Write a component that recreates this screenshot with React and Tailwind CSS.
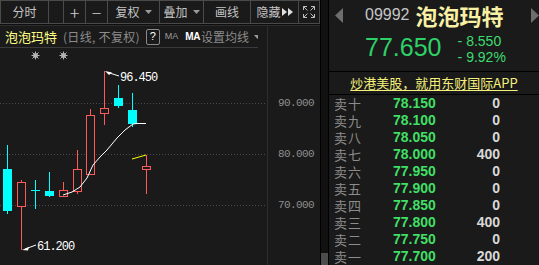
import React from 'react'

const candles = [
  { x: 3, bt: 169, bb: 210, h: 145, l: 214, up: false },
  { x: 17, bt: 182, bb: 206, h: 180, l: 250, up: true },
  { x: 31, bt: 190, bb: 190, h: 180, l: 209, up: false },
  { x: 45, bt: 191, bb: 195, h: 172, l: 197, up: false },
  { x: 59, bt: 190, bb: 196, h: 182, l: 196, up: true },
  { x: 73, bt: 169, bb: 191, h: 150, l: 194, up: true },
  { x: 86, bt: 115, bb: 174, h: 109, l: 174, up: true },
  { x: 100, bt: 108, bb: 113, h: 71, l: 125, up: true },
  { x: 114, bt: 98, bb: 105, h: 85, l: 108, up: false },
  { x: 128, bt: 110, bb: 123, h: 93, l: 127, up: false },
  { x: 142, bt: 166, bb: 169, h: 155, l: 194, up: true },
]

const asks = [
  ['卖十', '78.150', '0'],
  ['卖九', '78.100', '0'],
  ['卖八', '78.050', '0'],
  ['卖七', '78.000', '400'],
  ['卖六', '77.950', '0'],
  ['卖五', '77.900', '0'],
  ['卖四', '77.850', '0'],
  ['卖三', '77.800', '400'],
  ['卖二', '77.750', '0'],
  ['卖一', '77.700', '200'],
]

function Caret() {
  return (
    <svg width="7" height="4" viewBox="0 0 7 4" className="ml-[5px] shrink-0">
      <path d="M0 0h7L3.5 4z" fill="#9a9a9a" />
    </svg>
  )
}

function Star({ cx, cy }) {
  return (
    <g stroke="#b4b4b4" strokeWidth="1">
      <line x1={cx - 4} y1={cy} x2={cx + 4} y2={cy} />
      <line x1={cx} y1={cy - 4} x2={cx} y2={cy + 4} />
      <line x1={cx - 3} y1={cy - 3} x2={cx + 3} y2={cy + 3} />
      <line x1={cx - 3} y1={cy + 3} x2={cx + 3} y2={cy - 3} />
      <circle cx={cx} cy={cy} r="2" fill="#b4b4b4" />
    </g>
  )
}

function Chart() {
  return (
    <svg width="267" height="217" className="block">
      <g transform="translate(0,-48)">
        {[103.5, 154.5, 205.5].map(y => (
          <line key={y} x1="0" y1={y} x2="267" y2={y} stroke="#4a4a4a" strokeDasharray="1 2" />
        ))}
        <Star cx={35.5} cy={55.5} />
        <Star cx={63.5} cy={55.5} />
        {candles.map((c, i) => {
          const col = c.up ? '#ff5a5a' : '#00ffff'
          const wx = c.x + 4.5
          return (
            <g key={i}>
              <line x1={wx} y1={c.h} x2={wx} y2={c.l} stroke={col} />
              {c.bt === c.bb ? (
                <line x1={c.x} y1={c.bt + 0.5} x2={c.x + 9} y2={c.bt + 0.5} stroke={col} />
              ) : c.up ? (
                <rect x={c.x + 0.5} y={c.bt + 0.5} width="8" height={c.bb - c.bt} fill="#1a1a1a" stroke={col} />
              ) : (
                <rect x={c.x} y={c.bt} width="9" height={c.bb - c.bt + 1} fill={col} />
              )}
            </g>
          )
        })}
        <polyline
          points="63,195 72,192 80,187 87,178 93,165 100,157 107,150 117,138 125,130 133,124 137,123.5 146,123.5"
          fill="none"
          stroke="#ffffff"
          strokeWidth="1"
        />
        <line x1="132" y1="159" x2="146" y2="155" stroke="#ffff00" />
        <path d="M105 71l7 1.5-3 2.5z" fill="#fff" />
        <line x1="108" y1="72.5" x2="119" y2="76" stroke="#fff" />
        <text x="120" y="81" fill="#fff" fontSize="12" fontFamily="Liberation Mono, monospace" letterSpacing="-1">96.450</text>
        <path d="M22 250l7-3-1 3.5z" fill="#fff" />
        <line x1="25" y1="249" x2="36" y2="245" stroke="#fff" />
        <text x="37" y="250" fill="#fff" fontSize="12" fontFamily="Liberation Mono, monospace" letterSpacing="-1">61.200</text>
      </g>
    </svg>
  )
}

function Toolbar() {
  const cell = 'flex items-center justify-center border-r border-[#4a4a4a] h-full whitespace-nowrap'
  return (
    <div className="flex h-[24px] border-y border-[#4a4a4a] text-[12px] text-[#c4c4c4]">
      <div className={`${cell} w-[49px] border-l`}>分时</div>
      <div className={`${cell} w-[15px]`} />
      <div className={`${cell} w-[22px] text-[18px] font-light text-[#d0d0d0]`}>+</div>
      <div className={`${cell} w-[22px] text-[18px] font-light text-[#d0d0d0]`}>−</div>
      <div className={`${cell} w-[52px]`}>复权<Caret /></div>
      <div className={`${cell} w-[44px]`}>叠加<Caret /></div>
      <div className={`${cell} w-[47px]`}>画线</div>
      <div className={`${cell} w-[48px]`}>
        隐藏
        <svg width="11" height="8" viewBox="0 0 11 8" className="ml-[1px]">
          <path d="M0 0l5 4-5 4zM6 0l5 4-5 4z" fill="#e0e0e0" />
        </svg>
      </div>
      <div className={`${cell} w-[21px]`}>
        <svg width="12" height="12" viewBox="0 0 12 12" fill="none" stroke="#bdbdbd" strokeWidth="1">
          <path d="M0.5 4V0.5H4M0.5 0.5l4 4M8 0.5h3.5V4M11.5 0.5l-4 4M0.5 8v3.5H4M0.5 11.5l4-4M8 11.5h3.5V8M11.5 11.5l-4-4" />
        </svg>
      </div>
    </div>
  )
}

export default function App() {
  return (
    <div className="flex w-[539px] h-[265px] overflow-hidden bg-[#1a1a1a] font-['Noto_Sans_CJK_SC',sans-serif]">
      <div className="flex flex-col w-[320px] shrink-0">
        <Toolbar />
        <div className="h-[2px] border-t border-[#0e0e0e] border-b border-b-[#2c2c2c]" />
        <div className="flex flex-1">
          <div className="w-[268px] shrink-0 border-r border-[#2e2e2e] flex flex-col">
            <div className="w-[258px] h-[22px] border-b border-[#3a3a3a] flex items-center pl-[5px] text-[12px] leading-none whitespace-nowrap overflow-hidden">
              <span className="shrink-0 text-[13px] text-[#ffff88]">泡泡玛特</span>
              <span className="shrink-0 ml-[6px] text-[#8c8c8c] tracking-[0.3px]">(日线, 不复权)</span>
              <span className="shrink-0 ml-[6px] w-[14px] h-[16px] border border-[#8a8a8a] rounded-[2px] flex items-center justify-center text-[11px] text-white font-['Liberation_Sans',sans-serif]">?</span>
              <span className="shrink-0 ml-[5px] text-[9px] text-[#9a9a9a] font-['Liberation_Sans',sans-serif]">MA</span>
              <span className="shrink-0 ml-[7px] text-[10px] font-bold text-white font-['Liberation_Sans',sans-serif] tracking-[-0.5px]">MA</span>
              <span className="shrink-0 ml-[1px] text-[#8c8c8c]">设置均线</span>
              <Caret />
            </div>
            <Chart />
          </div>
          <div className="flex-1 flex flex-col items-end pt-[71px] pr-[6px] gap-[39px] text-[11px] leading-[12px] text-[#8e8e8e] font-['Liberation_Mono',monospace] tracking-[-0.6px]">
            <span>90.000</span>
            <span>80.000</span>
            <span>70.000</span>
          </div>
        </div>
      </div>
      <div className="w-[9px] shrink-0 flex flex-col justify-end border-x border-black bg-[#111111]">
        <div className="h-[12px] bg-[#4c4c4c]" />
      </div>
      <div className="flex-1 flex flex-col">
        <div className="flex items-center h-[30px] whitespace-nowrap">
          <svg width="8" height="15" viewBox="0 0 8 15" className="ml-[6px] shrink-0">
            <path d="M8 0v15L0 7.5z" fill="#6e6e6e" />
          </svg>
          <span className="ml-[22px] text-[16px] text-[#c6c6c6] font-['Liberation_Sans',sans-serif]">09992</span>
          <span className="ml-[6px] text-[22px] leading-none font-bold text-[#f8f0a4]">泡泡玛特</span>
          <div className="flex-1" />
          <svg width="8" height="15" viewBox="0 0 8 15" className="shrink-0">
            <path d="M0 0v15l8-7.5z" fill="#6e6e6e" />
          </svg>
        </div>
        <div className="flex h-[41px] font-['Liberation_Sans',sans-serif]">
          <span className="ml-[36px] mt-[5px] text-[25px] leading-none text-[#2ed068]">77.650</span>
          <div className="ml-[16px] mt-[3px] flex flex-col text-[14px] leading-[16px] text-[#3ddc70]">
            <span>-<span className="ml-[4px]">8.550</span></span>
            <span>-<span className="ml-[4px]">9.92%</span></span>
          </div>
        </div>
        <div className="h-[24px] border-y border-black flex items-center justify-center">
          <span className="text-[13px] leading-[16px] text-[#f5f07a] underline underline-offset-2 whitespace-nowrap">炒港美股，就用东财国际APP</span>
        </div>
        <div className="flex flex-col">
          {asks.map(([label, price, vol]) => (
            <div key={label} className="flex items-center h-[17px] pl-[5px]">
              <span className="w-[59px] text-[13px] leading-[17px] tracking-[1px] text-[#8c8c8c]">{label}</span>
              <span className="w-[60px] text-[14px] font-bold leading-[17px] text-[#40df65] font-['Liberation_Sans',sans-serif]">{price}</span>
              <span className="flex-1 pr-[39px] text-right text-[14px] font-bold leading-[17px] text-[#d8d8d8] font-['Liberation_Sans',sans-serif]">{vol}</span>
            </div>
          ))}
        </div>
      </div>
    </div>
  )
}
